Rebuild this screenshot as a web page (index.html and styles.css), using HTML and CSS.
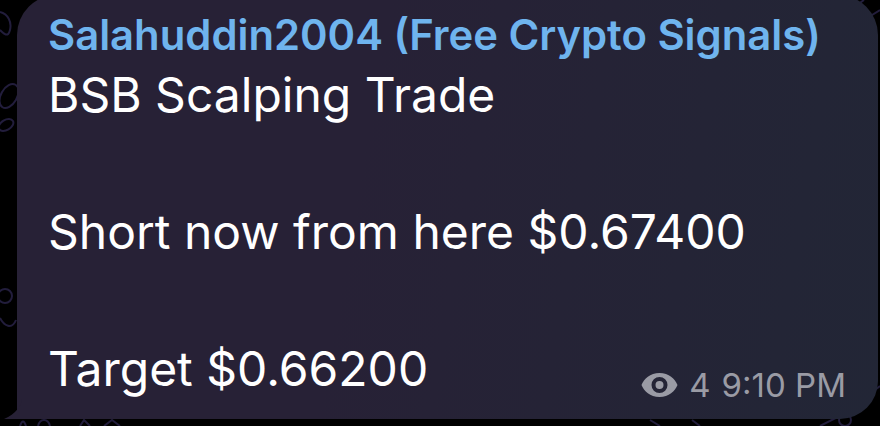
FILE: index.html
```html
<!DOCTYPE html>
<html lang="en">
<head>
  <meta charset="UTF-8">
  <title>Message</title>
  <link rel="stylesheet" href="styles.css">
</head>
<body>
  <svg class="doodles" width="880" height="426" viewBox="0 0 880 426" fill="none" stroke="#221d3c" stroke-width="2">
    <path d="M0 12c8 2 12 10 10 18s-6 4-10 0"/>
    <ellipse cx="9" cy="96" rx="8" ry="13" transform="rotate(30 9 96)"/>
    <ellipse cx="6" cy="125" rx="8" ry="5" transform="rotate(-30 6 125)"/>
    <circle cx="5" cy="296" r="7"/>
    <path d="M0 318c4 8 12 12 16 2"/>
    <path d="M20 426c2-6 4-6 6 0M38 426c2-8 10-8 12 0M80 426l4-6 6 6M104 426l8-6 8 6"/>
    <path d="M660 426l-10-6M700 426l-8-6M820 426l20-10 20-14M862 400l18-14M850 10l14-10M864 20l16-10"/>
    <circle cx="845" cy="420" r="6"/>
  </svg>
  <main class="bubble">
    <svg class="tail" width="32" height="28" viewBox="0 0 32 28"><path d="M18 0v8C17 15 12 23 0 28H32V0z" fill="#272136"/></svg>
    <div class="sender">Salahuddin2004 (Free Crypto Signals)</div>
    <div class="text">BSB Scalping Trade<br><br>Short now from here $0.67400<br><br>Target $0.66200</div>
    <div class="meta">
      <svg class="eye" width="37" height="26" viewBox="0 0 37 26"><path fill-rule="evenodd" d="M18.500 1C28 1 34 7 36.500 13 34 19 28 25 18.500 25S3 19 .5 13C3 7 9 1 18.500 1zm0 4a8 8 0 100 16 8 8 0 000-16zm0 4a4 4 0 110 8 4 4 0 010-8z" fill="#9a9ba5"/></svg>
      <span>4</span>
      <span>9:10 PM</span>
    </div>
  </main>
</body>
</html>
```
FILE: styles.css
```css
html, body {
  margin: 0;
  height: 426px;
  overflow: hidden;
}
body {
  background: #000;
  font-family: Inter, "Liberation Sans", sans-serif;
  padding: 0 2px 7px 17px;
  box-sizing: border-box;
  position: relative;
}
.doodles {
  position: absolute;
  left: 0;
  top: 0;
}
.bubble {
  position: relative;
  box-sizing: border-box;
  height: 424px;
  margin-top: -5px;
  padding: 14px 32px 0 31px;
  background: linear-gradient(100deg, #272136 0%, #272136 40%, #222636 100%);
  border-radius: 40px 40px 38px 4px;
}
.tail {
  position: absolute;
  left: -13px;
  bottom: 0;
}
.sender {
  color: #6fb4ee;
  font-size: 41.800px;
  font-weight: 600;
  line-height: 52px;
  white-space: nowrap;
}
.text {
  color: #fff;
  font-size: 48px;
  line-height: 68.500px;
  white-space: nowrap;
}
.meta {
  position: absolute;
  right: 32px;
  bottom: 16px;
  display: flex;
  align-items: center;
  gap: 11px;
  color: #9a9ba5;
  font-size: 33px;
  line-height: 36px;
}
```
